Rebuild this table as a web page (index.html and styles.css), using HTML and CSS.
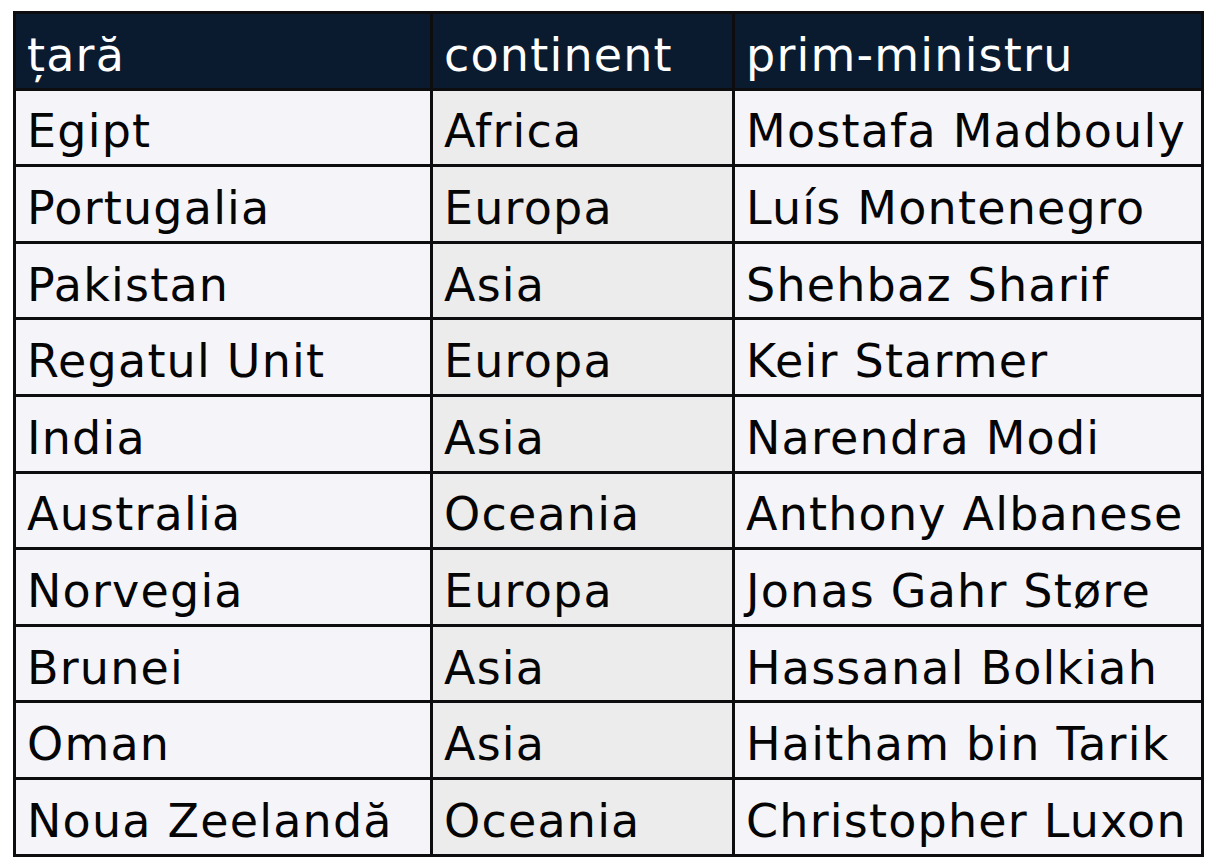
FILE: index.html
```html
<!DOCTYPE html>
<html lang="ro">
<head>
<meta charset="utf-8">
<title>Prim-miniștri</title>
<link rel="stylesheet" href="styles.css">
</head>
<body>
<table class="pm-table">
  <colgroup>
    <col class="col-country">
    <col class="col-continent">
    <col class="col-pm">
  </colgroup>
  <thead>
    <tr><th>țară</th><th>continent</th><th>prim-ministru</th></tr>
  </thead>
  <tbody>
    <tr><td>Egipt</td><td>Africa</td><td>Mostafa Madbouly</td></tr>
    <tr><td>Portugalia</td><td>Europa</td><td>Luís Montenegro</td></tr>
    <tr><td>Pakistan</td><td>Asia</td><td>Shehbaz Sharif</td></tr>
    <tr><td>Regatul Unit</td><td>Europa</td><td>Keir Starmer</td></tr>
    <tr><td>India</td><td>Asia</td><td>Narendra Modi</td></tr>
    <tr><td>Australia</td><td>Oceania</td><td>Anthony Albanese</td></tr>
    <tr><td>Norvegia</td><td>Europa</td><td>Jonas Gahr Støre</td></tr>
    <tr><td>Brunei</td><td>Asia</td><td>Hassanal Bolkiah</td></tr>
    <tr><td>Oman</td><td>Asia</td><td>Haitham bin Tarik</td></tr>
    <tr><td>Noua Zeelandă</td><td>Oceania</td><td>Christopher Luxon</td></tr>
  </tbody>
</table>
</body>
</html>
```
FILE: styles.css
```css
html, body {
  margin: 0;
  padding: 0;
  background: #ffffff;
}

body {
  padding: 11px 0 0 13px;
  font-family: "DejaVu Sans", "Noto Sans", sans-serif;
}

.pm-table {
  table-layout: fixed;
  width: 1191px;
  border-collapse: separate;
  border-spacing: 3px;
  background: #0d0d0f;
}

.col-country { width: 414px; }
.col-continent { width: 299px; }
.col-pm { width: 466px; }

.pm-table th,
.pm-table td {
  height: 73.6px;
  padding: 8px 10px 0 11px;
  box-sizing: border-box;
  text-align: left;
  vertical-align: middle;
  font-size: 46px;
  letter-spacing: 1.2px;
  line-height: 1;
  white-space: nowrap;
  overflow: hidden;
}

.pm-table th {
  background: #0b1b2f;
  color: #ffffff;
  font-weight: normal;
}

.pm-table td {
  background: #f4f4f9;
  color: #050505;
}

.pm-table td:nth-child(2) {
  background: #ececec;
}
```
